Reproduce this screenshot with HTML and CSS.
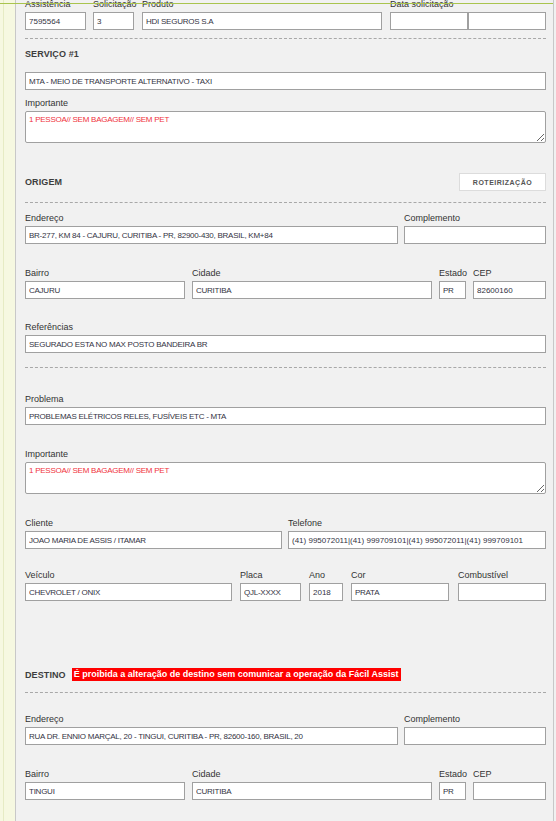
FILE: index.html
```html
<!DOCTYPE html>
<html lang="pt-BR">
<head>
<meta charset="utf-8">
<title>Serviço</title>
<link rel="stylesheet" href="styles.css">
</head>
<body>
<div class="topline"></div>
<div class="page">
  <div class="strip"></div>
  <div class="panel">
    <div class="row r-first">
      <div class="field f-assist"><label>Assistência</label><input class="ctl num" value="7595564" readonly></div>
      <div class="field f-solic"><label>Solicitação</label><input class="ctl num" value="3" readonly></div>
      <div class="field f-prod"><label>Produto</label><input class="ctl" value="HDI SEGUROS S.A" readonly></div>
      <div class="field f-data"><label>Data solicitação</label>
        <div class="pair"><input class="ctl" value="" readonly><input class="ctl" value="" readonly></div>
      </div>
    </div>
    <hr class="dash m8">

    <h2 class="sec m9">SERVIÇO #1</h2>
    <div class="row m12">
      <div class="field f-full"><input class="ctl" value="MTA - MEIO DE TRANSPORTE ALTERNATIVO - TAXI" readonly></div>
    </div>
    <div class="row m7">
      <div class="field f-full"><label>Importante</label><textarea class="ctl area" readonly>1 PESSOA// SEM BAGAGEM// SEM PET</textarea></div>
    </div>

    <div class="sechead m30">
      <h2 class="sec">ORIGEM</h2>
      <button class="btn" type="button">ROTEIRIZAÇÃO</button>
    </div>
    <hr class="dash m11">

    <div class="row m9">
      <div class="field f-end"><label>Endereço</label><input class="ctl" value="BR-277, KM 84 - CAJURU, CURITIBA - PR, 82900-430, BRASIL, KM+84" readonly></div>
      <div class="field f-comp"><label>Complemento</label><input class="ctl" value="" readonly></div>
    </div>
    <div class="row m23">
      <div class="field f-bairro"><label>Bairro</label><input class="ctl" value="CAJURU" readonly></div>
      <div class="field f-cidade"><label>Cidade</label><input class="ctl" value="CURITIBA" readonly></div>
      <div class="field f-uf"><label>Estado</label><input class="ctl" value="PR" readonly></div>
      <div class="field f-cep"><label>CEP</label><input class="ctl num" value="82600160" readonly></div>
    </div>
    <div class="row m22">
      <div class="field f-full"><label>Referências</label><input class="ctl" value="SEGURADO ESTA NO MAX POSTO BANDEIRA BR" readonly></div>
    </div>
    <hr class="dash m14">

    <div class="row m25">
      <div class="field f-full"><label>Problema</label><input class="ctl" value="PROBLEMAS ELÉTRICOS RELES, FUSÍVEIS ETC - MTA" readonly></div>
    </div>
    <div class="row m23">
      <div class="field f-full"><label>Importante</label><textarea class="ctl area" readonly>1 PESSOA// SEM BAGAGEM// SEM PET</textarea></div>
    </div>
    <div class="row m23">
      <div class="field f-cli"><label>Cliente</label><input class="ctl" value="JOAO MARIA DE ASSIS / ITAMAR" readonly></div>
      <div class="field f-tel"><label>Telefone</label><input class="ctl num" value="(41) 995072011|(41) 999709101|(41) 995072011|(41) 999709101" readonly></div>
    </div>
    <div class="row m20">
      <div class="field f-vei"><label>Veículo</label><input class="ctl" value="CHEVROLET / ONIX" readonly></div>
      <div class="field f-placa"><label>Placa</label><input class="ctl" value="QJL-XXXX" readonly></div>
      <div class="field f-ano"><label>Ano</label><input class="ctl num" value="2018" readonly></div>
      <div class="field f-cor"><label>Cor</label><input class="ctl" value="PRATA" readonly></div>
      <div class="field f-comb"><label>Combustível</label><input class="ctl" value="" readonly></div>
    </div>

    <div class="sechead dest m67">
      <h2 class="sec">DESTINO</h2>
      <span class="alert">É proibida a alteração de destino sem comunicar a operação da Fácil Assist</span>
    </div>
    <hr class="dash m11">

    <div class="row m20">
      <div class="field f-end"><label>Endereço</label><input class="ctl" value="RUA DR. ENNIO MARÇAL, 20 - TINGUI, CURITIBA - PR, 82600-160, BRASIL, 20" readonly></div>
      <div class="field f-comp"><label>Complemento</label><input class="ctl" value="" readonly></div>
    </div>
    <div class="row m23">
      <div class="field f-bairro"><label>Bairro</label><input class="ctl" value="TINGUI" readonly></div>
      <div class="field f-cidade"><label>Cidade</label><input class="ctl" value="CURITIBA" readonly></div>
      <div class="field f-uf"><label>Estado</label><input class="ctl" value="PR" readonly></div>
      <div class="field f-cep"><label>CEP</label><input class="ctl num" value="" readonly></div>
    </div>
    <div class="tail"></div>
  </div>
</div>
</body>
</html>
```

FILE: styles.css
```css
html, body {
  margin: 0;
  padding: 0;
  background: #f1f1f1;
  font-family: "Liberation Sans", Arial, sans-serif;
  overflow: hidden;
}

.topline {
  position: fixed;
  top: 3px;
  left: 0;
  width: 553px;
  height: 1px;
  background: #a9c44e;
  z-index: 5;
}

.page {
  display: flex;
  align-items: stretch;
  min-height: 100vh;
}

.strip {
  width: 15px;
  flex: none;
  background: #f6f8e1;
  border-right: 1px solid #c8c8c8;
  box-shadow: inset 3px 0 0 #f6f8e1, inset 4px 0 0 #e6ebc4;
}

.panel {
  width: 521px;
  flex: none;
  padding: 0 7px 0 9px;
  background: #f1f1f1;
  border-right: 1px solid #c8c8c8;
}

.row {
  display: flex;
  align-items: flex-end;
}

.r-first { margin-top: -2px; }

.field {
  display: flex;
  flex-direction: column;
  flex: none;
}

.field label {
  font-size: 9px;
  line-height: 12px;
  height: 12px;
  color: #333;
  margin-bottom: 2px;
  white-space: nowrap;
}

.ctl {
  box-sizing: border-box;
  display: block;
  width: 100%;
  height: 18px;
  margin: 0;
  border: 1px solid #a0a0a0;
  border-radius: 0;
  background: #fff;
  padding: 0 3px;
  font-family: "Liberation Sans", Arial, sans-serif;
  font-size: 8px;
  letter-spacing: -0.25px;
  color: #33333f;
  outline: none;
}

.ctl.num {
  letter-spacing: 0;
}

.area {
  height: 32px;
  padding: 3px 3px;
  border-radius: 2px;
  color: #f0323c;
  resize: vertical;
  line-height: 10px;
}

.pair { display: flex; }
.pair .ctl { width: 78px; }

.f-assist { width: 61px; margin-right: 7px; }
.f-solic  { width: 41px; margin-right: 8px; }
.f-prod   { width: 240px; margin-right: 8px; }
.f-data   { width: 156px; }

.f-full   { width: 521px; }

.f-end    { width: 373px; margin-right: 6px; }
.f-comp   { width: 142px; }

.f-bairro { width: 160px; margin-right: 7px; }
.f-cidade { width: 240px; margin-right: 7px; }
.f-uf     { width: 27px;  margin-right: 7px; }
.f-cep    { width: 73px; }

.f-cli    { width: 257px; margin-right: 6px; }
.f-tel    { width: 258px; }

.f-vei    { width: 207px; margin-right: 8px; }
.f-placa  { width: 61px;  margin-right: 8px; }
.f-ano    { width: 34px;  margin-right: 8px; }
.f-cor    { width: 98px;  margin-right: 9px; }
.f-comb   { width: 88px; }

.dash {
  height: 0;
  border: 0;
  border-top: 1px dashed #a8a8a8;
  margin-bottom: 0;
  margin-left: 0;
  margin-right: 0;
}

.sec {
  margin: 0;
  font-size: 9px;
  line-height: 12px;
  font-weight: bold;
  color: #3d3d3d;
  letter-spacing: 0.1px;
}

.sechead {
  display: flex;
  align-items: center;
  justify-content: space-between;
  height: 18px;
}

.btn {
  width: 87px;
  height: 18px;
  box-sizing: border-box;
  margin: 0;
  padding: 0;
  background: #fff;
  border: 1px solid #dcdcdc;
  font-family: "Liberation Sans", Arial, sans-serif;
  font-size: 7px;
  font-weight: bold;
  letter-spacing: 0.5px;
  color: #555;
}

.dest {
  justify-content: flex-start;
  height: 13px;
  gap: 6px;
}

.alert {
  background: #ff0000;
  color: #fff;
  font-size: 9px;
  font-weight: bold;
  line-height: 13px;
  padding: 0 2px;
  white-space: nowrap;
}

.m7  { margin-top: 7px; }
.m8  { margin-top: 8px; }
.m9  { margin-top: 9px; }
.m11 { margin-top: 11px; }
.m12 { margin-top: 12px; }
.m14 { margin-top: 14px; }
.m20 { margin-top: 20px; }
.m22 { margin-top: 22px; }
.m23 { margin-top: 23px; }
.m25 { margin-top: 25px; }
.m30 { margin-top: 30px; }
.m67 { margin-top: 67px; }

.tail { height: 40px; }
```
